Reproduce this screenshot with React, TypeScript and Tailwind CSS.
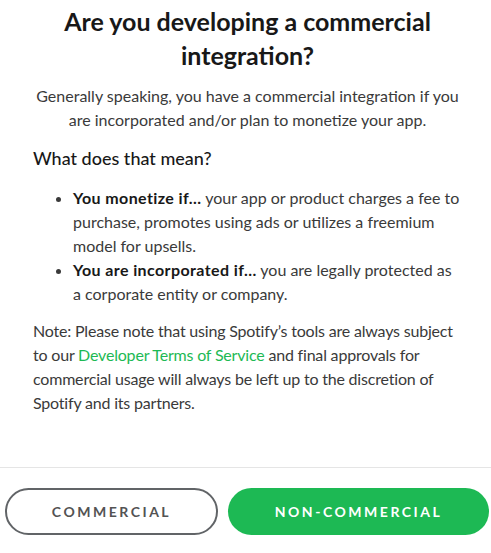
export default function App() {
  return (
    <div
      className="min-h-screen w-[491px] bg-white text-[#181818]"
      style={{ fontFamily: "Lato, 'Noto Sans', sans-serif" }}
    >
      <div className="pl-[33px] pr-[29px] pt-[4px]">
        <h1 className="text-center text-[25px] font-bold leading-[34px] text-[#181818]">
          Are you developing a commercial integration?
        </h1>
        <p className="mt-[12px] text-center text-[16px] leading-[24px] text-[#3a3a3a]">
          Generally speaking, you have a commercial integration if you are incorporated and/or plan
          to monetize your app.
        </p>
        <h2 className="mt-[14px] text-[18px] font-medium leading-[24px] text-[#181818]">
          What does that mean?
        </h2>
        <ul className="mt-[16px] list-disc pl-[40px] text-[16px] leading-[24px] text-[#3a3a3a]">
          <li>
            <strong className="font-bold tracking-[0.025em] text-[#181818]">You monetize if...</strong>{" "}
            your app or product charges a fee to purchase, promotes using ads or utilizes a freemium
            model for upsells.
          </li>
          <li>
            <strong className="font-bold tracking-[0.025em] text-[#181818]">
              You are incorporated if...
            </strong>{" "}
            you are legally protected as a corporate entity or company.
          </li>
        </ul>
        <p className="mt-[13px] text-[16px] leading-[24px] tracking-[-0.012em] text-[#3a3a3a]">
          Note: Please note that using Spotify’s tools are always subject to our{" "}
          <a className="text-[#1db954]">Developer Terms of Service</a> and final approvals for
          commercial usage will always be left up to the discretion of Spotify and its partners.
        </p>
      </div>
      <div className="mt-[52px] flex gap-[10px] border-t border-[#e5e5e5] pl-[5px] pr-[2px] pt-[20px]">
        <button
          type="button"
          className="h-[47px] w-[213px] rounded-full border-2 border-[#616467] text-[14px] font-bold uppercase tracking-[0.18em] text-[#535353]"
        >
          Commercial
        </button>
        <button
          type="button"
          className="h-[47px] flex-1 rounded-full bg-[#1db954] text-[14px] font-bold uppercase tracking-[0.18em] text-white"
        >
          Non-Commercial
        </button>
      </div>
    </div>
  );
}
